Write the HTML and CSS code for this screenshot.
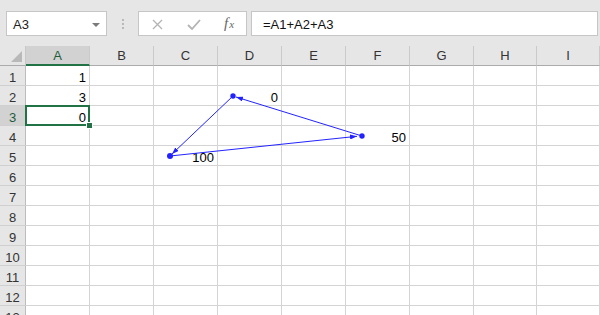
FILE: index.html
```html
<!DOCTYPE html>
<html lang="en">
<head>
  <meta charset="UTF-8">
  <title>Circular reference</title>
  <link rel="stylesheet" href="styles.css">
</head>
<body>

<div class="toolbar">
  <div class="namebox">
    <span>A3</span>
    <span class="caret"></span>
  </div>
  <div class="grip"><i></i><i></i><i></i></div>
  <div class="fxbtns">
    <svg class="btn-x" width="11" height="11" viewBox="0 0 11 11">
      <path d="M1 1 L10 10 M10 1 L1 10" stroke="#b4b4b4" stroke-width="1.3" fill="none"/>
    </svg>
    <svg class="btn-ok" width="14" height="11" viewBox="0 0 14 11">
      <path d="M1 6 L5 10 L13 1" stroke="#b4b4b4" stroke-width="1.8" fill="none"/>
    </svg>
    <span class="fx">f<sub>x</sub></span>
  </div>
  <div class="formula">=A1+A2+A3</div>
</div>

<div class="sheet">
  <div id="grid" class="grid"></div>

  <svg class="arrows" width="600" height="269" viewBox="0 0 600 269">
    <defs>
      <marker id="head" viewBox="0 0 7 5" refX="7" refY="2.5" markerWidth="7" markerHeight="5"
              markerUnits="userSpaceOnUse" orient="auto">
        <path d="M0 0 L7 2.5 L0 5 z" fill="#2323ff"/>
      </marker>
    </defs>
    <g stroke="#2323ff" stroke-width="1" fill="none">
      <line x1="233" y1="50" x2="172" y2="108" marker-end="url(#head)"/>
      <line x1="362" y1="90" x2="236" y2="51" marker-end="url(#head)"/>
      <line x1="170" y1="110" x2="357" y2="90.3" marker-end="url(#head)"/>
    </g>
    <g fill="#2323ff">
      <circle cx="233" cy="50" r="2.7"/>
      <circle cx="362" cy="90" r="2.7"/>
      <circle cx="170" cy="110" r="3"/>
    </g>
  </svg>
</div>

<script>
  const grid = document.getElementById('grid');
  const cols = ['A', 'B', 'C', 'D', 'E', 'F', 'G', 'H', 'I'];
  const totalRows = 13;
  const active = { col: 'A', row: 3 };

  // cell values (formulas already evaluated)
  const values = {
    A1: '1',
    A2: '3',
    A3: '0',
    D2: '0',
    F4: '50',
    C5: '100'
  };

  function addCell(cls, text) {
    const cell = document.createElement('div');
    cell.className = cls;
    if (text) cell.innerText = text;
    grid.appendChild(cell);
    return cell;
  }

  function drawSheet() {
    grid.innerHTML = '';

    const corner = addCell('corner');
    corner.appendChild(document.createElement('span'));

    cols.forEach(c => {
      addCell('col-head' + (c === active.col ? ' on' : ''), c);
    });

    for (let r = 1; r <= totalRows; r++) {
      addCell('row-head' + (r === active.row ? ' on' : ''), String(r));
      cols.forEach(c => {
        const id = c + r;
        const isActive = c === active.col && r === active.row;
        addCell('cell' + (isActive ? ' active' : ''), values[id]);
      });
    }
  }

  drawSheet();
</script>
</body>
</html>
```

FILE: styles.css
```css
body, html {
  margin: 0;
  padding: 0;
  width: 600px;
  height: 315px;
  overflow: hidden;
  background: #fff;
  font-family: "Liberation Sans", Arial, sans-serif;
  font-size: 13px;
  color: #000;
}

/* formula bar */
.toolbar {
  height: 46px;
  box-sizing: border-box;
  padding: 11px 2px 10px 6px;
  display: flex;
  background: #e6e6e6;
}

.namebox {
  width: 101px;
  box-sizing: border-box;
  border: 1px solid #c6c6c6;
  background: #fff;
  display: flex;
  justify-content: space-between;
  align-items: flex-start;
  padding: 3px 6px 0 6px;
  line-height: 20px;
  color: #222;
}

.caret {
  margin-top: 8px;
  width: 0;
  height: 0;
  border-left: 4px solid transparent;
  border-right: 4px solid transparent;
  border-top: 4px solid #7a7a7a;
}

.grip {
  width: 31px;
  display: flex;
  flex-direction: column;
  align-items: center;
  justify-content: center;
  gap: 2px;
}

.grip i {
  display: block;
  width: 2px;
  height: 2px;
  background: #b8b8b8;
}

.fxbtns {
  width: 109px;
  box-sizing: border-box;
  border: 1px solid #c6c6c6;
  background: #fff;
  display: flex;
  align-items: center;
  padding-top: 1px;
}

.btn-x {
  margin-left: 13px;
}

.btn-ok {
  margin-left: 24px;
}

.fx {
  margin-left: 23px;
  font-family: "Liberation Serif", "Times New Roman", serif;
  font-style: italic;
  font-size: 15px;
  color: #666;
  line-height: 15px;
}

.fx sub {
  font-size: 11px;
  vertical-align: 0;
  margin-left: 1px;
}

.formula {
  flex: 1;
  margin-left: 4px;
  box-sizing: border-box;
  border: 1px solid #c6c6c6;
  background: #fff;
  padding: 3px 0 0 11px;
  line-height: 20px;
  color: #111;
}

/* worksheet */
.sheet {
  position: relative;
}

.grid {
  display: grid;
  grid-template-columns: 26px repeat(7, 64px) 63px 63px;
  grid-auto-rows: 20px;
}

.corner, .col-head, .row-head, .cell {
  box-sizing: border-box;
  height: 20px;
}

.corner {
  background: #e6e6e6;
  border-right: 1px solid #c8c8c8;
  border-bottom: 1px solid #ababab;
  position: relative;
}

.corner span {
  position: absolute;
  right: 3px;
  bottom: 3px;
  width: 0;
  height: 0;
  border-left: 11px solid transparent;
  border-bottom: 11px solid #b9b9b9;
}

.col-head {
  background: #e6e6e6;
  border-right: 1px solid #cacaca;
  border-bottom: 1px solid #ababab;
  text-align: center;
  padding-top: 1px;
  line-height: 18px;
  color: #333;
}

.col-head.on {
  background: #d2d2d2;
  border-bottom: 2px solid #217346;
  color: #1e5c3a;
}

.row-head {
  background: #e6e6e6;
  border-right: 1px solid #bdbdbd;
  border-bottom: 1px solid #d0d0d0;
  text-align: center;
  padding-top: 5px;
  line-height: 14px;
  color: #333;
}

.row-head.on {
  background: #d2d2d2;
  color: #1e5c3a;
}

.cell {
  border-right: 1px solid #d4d4d4;
  border-bottom: 1px solid #d4d4d4;
  text-align: right;
  padding: 5px 3px 0 0;
  line-height: 14px;
  white-space: nowrap;
}

.cell.active {
  position: relative;
  z-index: 2;
}

.cell.active::after {
  content: "";
  position: absolute;
  left: -1px;
  top: -1px;
  right: -1px;
  bottom: -1px;
  border: 2px solid #217346;
}

.cell.active::before {
  content: "";
  position: absolute;
  right: -3px;
  bottom: -3px;
  width: 5px;
  height: 5px;
  background: #217346;
  box-shadow: 0 0 0 1px #fff;
  z-index: 3;
}

.arrows {
  position: absolute;
  top: 0;
  left: 0;
  z-index: 4;
}
```
